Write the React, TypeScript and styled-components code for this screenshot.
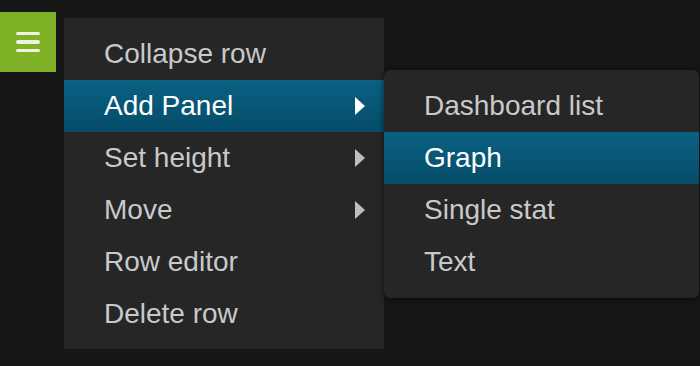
import React from "react";
import styled, { createGlobalStyle, css } from "styled-components";

const GlobalStyle = createGlobalStyle`
  html, body {
    margin: 0;
    padding: 0;
    background: #161616;
    font-family: "Liberation Sans", Arial, sans-serif;
    overflow: hidden;
  }
`;

const Page = styled.div`
  width: 700px;
  height: 366px;
  padding-top: 12px;
  box-sizing: border-box;
  display: flex;
  align-items: flex-start;
`;

const MenuButton = styled.div`
  width: 56px;
  height: 60px;
  background: #7eb125;
  display: flex;
  flex-direction: column;
  align-items: center;
  justify-content: center;
  gap: 5px;

  & span {
    display: block;
    width: 24px;
    height: 3.5px;
    border-radius: 2px;
    background: #eef3df;
  }
`;

const Menu = styled.ul`
  list-style: none;
  margin: 6px 0 0 8px;
  padding: 10px 0 9px;
  width: 320px;
  background: #262626;
  position: relative;
`;

const SubMenu = styled.ul`
  list-style: none;
  margin: 0;
  padding: 10px 0;
  position: absolute;
  left: 320px;
  top: -10px;
  width: 315px;
  background: #262626;
  border-radius: 6px;
  box-shadow: 0 1px 6px rgba(0, 0, 0, 0.6);
`;

const Item = styled.li<{ $active?: boolean }>`
  position: relative;
  height: 52px;
  line-height: 52px;
  padding-left: 40px;
  font-size: 28px;
  color: #c8c9ca;
  display: flex;
  align-items: center;
  ${({ $active }) =>
    $active &&
    css`
      color: #ffffff;
      background: linear-gradient(#0a6183, #054c69);
    `}
`;

const Caret = styled.span<{ $active?: boolean }>`
  position: absolute;
  right: 19px;
  top: 17px;
  width: 0;
  height: 0;
  border-top: 9px solid transparent;
  border-bottom: 9px solid transparent;
  border-left: 10px solid ${({ $active }) => ($active ? "#ffffff" : "#bcbdbe")};
`;

const App: React.FC = () => {
  return (
    <>
      <GlobalStyle />
      <Page>
        <MenuButton>
          <span />
          <span />
          <span />
        </MenuButton>
        <Menu>
          <Item>Collapse row</Item>
          <Item $active>
            Add Panel
            <Caret $active />
            <SubMenu>
              <Item>Dashboard list</Item>
              <Item $active>Graph</Item>
              <Item>Single stat</Item>
              <Item>Text</Item>
            </SubMenu>
          </Item>
          <Item>
            Set height
            <Caret />
          </Item>
          <Item>
            Move
            <Caret />
          </Item>
          <Item>Row editor</Item>
          <Item>Delete row</Item>
        </Menu>
      </Page>
    </>
  );
};

export default App;
